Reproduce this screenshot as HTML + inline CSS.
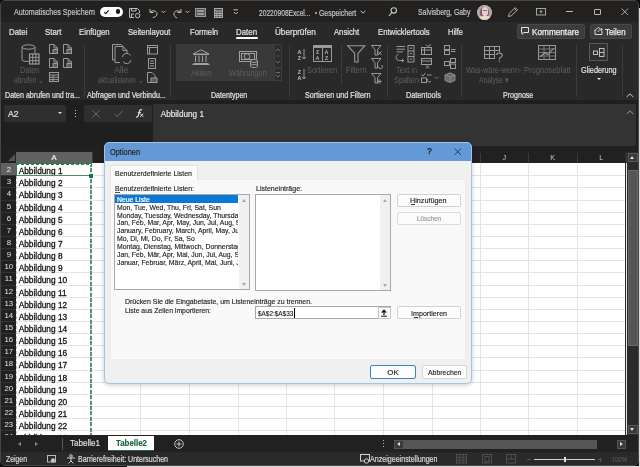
<!DOCTYPE html>
<html><head><meta charset="utf-8">
<style>
*{box-sizing:border-box;margin:0;padding:0}
html,body{width:640px;height:467px;overflow:hidden;background:#0e0e0e}
body{position:relative;font-family:"Liberation Sans",sans-serif}
.a{position:absolute}
.t{position:absolute;white-space:pre;font-family:"Liberation Sans",sans-serif;-webkit-text-stroke:0.2px;filter:grayscale(1)}
svg{position:absolute;overflow:visible}
</style></head><body>
<div class="a" style="left:639px;top:8px;width:1px;height:459px;background:#dcdcdc"></div>
<div class="a" style="left:127px;top:466px;width:513px;height:1px;background:#dcdcdc"></div>
<div class="a" style="left:0;top:0;width:639px;height:466px;border:1px solid #474747;border-radius:5px;background:#292929;overflow:hidden"></div>
<div class="a" style="left:1px;top:1px;width:637px;height:21px;background:#232120;border-radius:4px 4px 0 0"></div>
<div class="a" style="left:1px;top:22px;width:637px;height:78px;background:#292929;"></div>
<div class="a" style="left:1px;top:100px;width:637px;height:52px;background:#1f1f1f;"></div>
<div class="a" style="left:4px;top:105px;width:62px;height:17px;background:#2f2f2f;border-radius:2px"></div>
<div class="a" style="left:84px;top:105px;width:68px;height:17px;background:#2f2f2f;border-radius:2px"></div>
<div class="a" style="left:153px;top:104px;width:483px;height:42px;background:#333333;border-radius:2px"></div>
<div class="a" style="left:1px;top:146px;width:637px;height:17px;background:#212121;"></div>
<div class="a" style="left:16px;top:163px;width:609px;height:273px;background:#ffffff;"></div>
<div class="a" style="left:1px;top:163px;width:15px;height:273px;background:#212121;"></div>
<div class="a" style="left:625px;top:152px;width:13px;height:284px;background:#2b2b2b;"></div>
<div class="a" style="left:140px;top:163px;width:1px;height:273px;background:#e5e5e5;"></div>
<div class="a" style="left:189px;top:163px;width:1px;height:273px;background:#e5e5e5;"></div>
<div class="a" style="left:238px;top:163px;width:1px;height:273px;background:#e5e5e5;"></div>
<div class="a" style="left:286px;top:163px;width:1px;height:273px;background:#e5e5e5;"></div>
<div class="a" style="left:334px;top:163px;width:1px;height:273px;background:#e5e5e5;"></div>
<div class="a" style="left:383px;top:163px;width:1px;height:273px;background:#e5e5e5;"></div>
<div class="a" style="left:432px;top:163px;width:1px;height:273px;background:#e5e5e5;"></div>
<div class="a" style="left:480px;top:163px;width:1px;height:273px;background:#e5e5e5;"></div>
<div class="a" style="left:528px;top:163px;width:1px;height:273px;background:#e5e5e5;"></div>
<div class="a" style="left:577px;top:163px;width:1px;height:273px;background:#e5e5e5;"></div>
<div class="a" style="left:626px;top:163px;width:1px;height:273px;background:#e5e5e5;"></div>
<div class="a" style="left:16px;top:175px;width:609px;height:1px;background:#e5e5e5;"></div>
<div class="a" style="left:1px;top:175px;width:15px;height:1px;background:#333333;"></div>
<div class="a" style="left:16px;top:187px;width:609px;height:1px;background:#e5e5e5;"></div>
<div class="a" style="left:1px;top:187px;width:15px;height:1px;background:#333333;"></div>
<div class="a" style="left:16px;top:200px;width:609px;height:1px;background:#e5e5e5;"></div>
<div class="a" style="left:1px;top:200px;width:15px;height:1px;background:#333333;"></div>
<div class="a" style="left:16px;top:212px;width:609px;height:1px;background:#e5e5e5;"></div>
<div class="a" style="left:1px;top:212px;width:15px;height:1px;background:#333333;"></div>
<div class="a" style="left:16px;top:224px;width:609px;height:1px;background:#e5e5e5;"></div>
<div class="a" style="left:1px;top:224px;width:15px;height:1px;background:#333333;"></div>
<div class="a" style="left:16px;top:236px;width:609px;height:1px;background:#e5e5e5;"></div>
<div class="a" style="left:1px;top:236px;width:15px;height:1px;background:#333333;"></div>
<div class="a" style="left:16px;top:248px;width:609px;height:1px;background:#e5e5e5;"></div>
<div class="a" style="left:1px;top:248px;width:15px;height:1px;background:#333333;"></div>
<div class="a" style="left:16px;top:260px;width:609px;height:1px;background:#e5e5e5;"></div>
<div class="a" style="left:1px;top:260px;width:15px;height:1px;background:#333333;"></div>
<div class="a" style="left:16px;top:272px;width:609px;height:1px;background:#e5e5e5;"></div>
<div class="a" style="left:1px;top:272px;width:15px;height:1px;background:#333333;"></div>
<div class="a" style="left:16px;top:285px;width:609px;height:1px;background:#e5e5e5;"></div>
<div class="a" style="left:1px;top:285px;width:15px;height:1px;background:#333333;"></div>
<div class="a" style="left:16px;top:297px;width:609px;height:1px;background:#e5e5e5;"></div>
<div class="a" style="left:1px;top:297px;width:15px;height:1px;background:#333333;"></div>
<div class="a" style="left:16px;top:309px;width:609px;height:1px;background:#e5e5e5;"></div>
<div class="a" style="left:1px;top:309px;width:15px;height:1px;background:#333333;"></div>
<div class="a" style="left:16px;top:321px;width:609px;height:1px;background:#e5e5e5;"></div>
<div class="a" style="left:1px;top:321px;width:15px;height:1px;background:#333333;"></div>
<div class="a" style="left:16px;top:333px;width:609px;height:1px;background:#e5e5e5;"></div>
<div class="a" style="left:1px;top:333px;width:15px;height:1px;background:#333333;"></div>
<div class="a" style="left:16px;top:345px;width:609px;height:1px;background:#e5e5e5;"></div>
<div class="a" style="left:1px;top:345px;width:15px;height:1px;background:#333333;"></div>
<div class="a" style="left:16px;top:357px;width:609px;height:1px;background:#e5e5e5;"></div>
<div class="a" style="left:1px;top:357px;width:15px;height:1px;background:#333333;"></div>
<div class="a" style="left:16px;top:370px;width:609px;height:1px;background:#e5e5e5;"></div>
<div class="a" style="left:1px;top:370px;width:15px;height:1px;background:#333333;"></div>
<div class="a" style="left:16px;top:382px;width:609px;height:1px;background:#e5e5e5;"></div>
<div class="a" style="left:1px;top:382px;width:15px;height:1px;background:#333333;"></div>
<div class="a" style="left:16px;top:394px;width:609px;height:1px;background:#e5e5e5;"></div>
<div class="a" style="left:1px;top:394px;width:15px;height:1px;background:#333333;"></div>
<div class="a" style="left:16px;top:406px;width:609px;height:1px;background:#e5e5e5;"></div>
<div class="a" style="left:1px;top:406px;width:15px;height:1px;background:#333333;"></div>
<div class="a" style="left:16px;top:418px;width:609px;height:1px;background:#e5e5e5;"></div>
<div class="a" style="left:1px;top:418px;width:15px;height:1px;background:#333333;"></div>
<div class="a" style="left:16px;top:430px;width:609px;height:1px;background:#e5e5e5;"></div>
<div class="a" style="left:1px;top:430px;width:15px;height:1px;background:#333333;"></div>
<div class="a" style="left:16px;top:442px;width:609px;height:1px;background:#e5e5e5;"></div>
<div class="a" style="left:1px;top:442px;width:15px;height:1px;background:#333333;"></div>
<div class="a" style="left:16px;top:455px;width:609px;height:1px;background:#e5e5e5;"></div>
<div class="a" style="left:1px;top:455px;width:15px;height:1px;background:#333333;"></div>
<div class="a" style="left:16px;top:152px;width:76px;height:11px;background:#616161;"></div>
<div class="a" style="left:8px;top:154px;width:7px;height:7px;background:#555;clip-path:polygon(100% 0,100% 100%,0 100%)"></div>
<div class="t" style="left:51.46px;top:152.00px;line-height:11px;font-size:7.6px;color:#f2f2f2;font-weight:400;">A</div>
<div class="a" style="left:92px;top:153px;width:1px;height:10px;background:#3a3a3a;"></div>
<div class="a" style="left:140px;top:153px;width:1px;height:10px;background:#3a3a3a;"></div>
<div class="a" style="left:189px;top:153px;width:1px;height:10px;background:#3a3a3a;"></div>
<div class="a" style="left:238px;top:153px;width:1px;height:10px;background:#3a3a3a;"></div>
<div class="a" style="left:286px;top:153px;width:1px;height:10px;background:#3a3a3a;"></div>
<div class="a" style="left:334px;top:153px;width:1px;height:10px;background:#3a3a3a;"></div>
<div class="a" style="left:383px;top:153px;width:1px;height:10px;background:#3a3a3a;"></div>
<div class="a" style="left:432px;top:153px;width:1px;height:10px;background:#3a3a3a;"></div>
<div class="a" style="left:480px;top:153px;width:1px;height:10px;background:#3a3a3a;"></div>
<div class="a" style="left:528px;top:153px;width:1px;height:10px;background:#3a3a3a;"></div>
<div class="a" style="left:577px;top:153px;width:1px;height:10px;background:#3a3a3a;"></div>
<div class="a" style="left:626px;top:153px;width:1px;height:10px;background:#3a3a3a;"></div>
<div class="t" style="left:502.45px;top:152.30px;line-height:11px;font-size:7.2px;color:#c8c8c8;font-weight:400;-webkit-text-stroke:0">J</div>
<div class="t" style="left:550.35px;top:152.30px;line-height:11px;font-size:7.2px;color:#c8c8c8;font-weight:400;-webkit-text-stroke:0">K</div>
<div class="t" style="left:599.25px;top:152.30px;line-height:11px;font-size:7.2px;color:#c8c8c8;font-weight:400;-webkit-text-stroke:0">L</div>
<div class="a" style="left:1px;top:163px;width:15px;height:12px;background:#616161;"></div>
<div class="t" style="left:6.63px;top:163.70px;line-height:12px;font-size:7.8px;color:#f2f2f2;font-weight:400;-webkit-text-stroke:0">2</div>
<div class="t" style="left:18.70px;top:164.90px;line-height:12px;font-size:8.3px;color:#151515;font-weight:400;-webkit-text-stroke:0.15px;-webkit-text-stroke:0.3px #151515">Abbildung 1</div>
<div class="t" style="left:6.63px;top:175.70px;line-height:12px;font-size:7.8px;color:#e2e2e2;font-weight:400;-webkit-text-stroke:0">3</div>
<div class="t" style="left:18.70px;top:176.90px;line-height:12px;font-size:8.3px;color:#151515;font-weight:400;-webkit-text-stroke:0.15px;-webkit-text-stroke:0.3px #151515">Abbildung 2</div>
<div class="t" style="left:6.63px;top:187.70px;line-height:12px;font-size:7.8px;color:#e2e2e2;font-weight:400;-webkit-text-stroke:0">4</div>
<div class="t" style="left:18.70px;top:188.90px;line-height:12px;font-size:8.3px;color:#151515;font-weight:400;-webkit-text-stroke:0.15px;-webkit-text-stroke:0.3px #151515">Abbildung 3</div>
<div class="t" style="left:6.63px;top:200.70px;line-height:12px;font-size:7.8px;color:#e2e2e2;font-weight:400;-webkit-text-stroke:0">5</div>
<div class="t" style="left:18.70px;top:201.90px;line-height:12px;font-size:8.3px;color:#151515;font-weight:400;-webkit-text-stroke:0.15px;-webkit-text-stroke:0.3px #151515">Abbildung 4</div>
<div class="t" style="left:6.63px;top:212.70px;line-height:12px;font-size:7.8px;color:#e2e2e2;font-weight:400;-webkit-text-stroke:0">6</div>
<div class="t" style="left:18.70px;top:213.90px;line-height:12px;font-size:8.3px;color:#151515;font-weight:400;-webkit-text-stroke:0.15px;-webkit-text-stroke:0.3px #151515">Abbildung 5</div>
<div class="t" style="left:6.63px;top:224.70px;line-height:12px;font-size:7.8px;color:#e2e2e2;font-weight:400;-webkit-text-stroke:0">7</div>
<div class="t" style="left:18.70px;top:225.90px;line-height:12px;font-size:8.3px;color:#151515;font-weight:400;-webkit-text-stroke:0.15px;-webkit-text-stroke:0.3px #151515">Abbildung 6</div>
<div class="t" style="left:6.63px;top:236.70px;line-height:12px;font-size:7.8px;color:#e2e2e2;font-weight:400;-webkit-text-stroke:0">8</div>
<div class="t" style="left:18.70px;top:237.90px;line-height:12px;font-size:8.3px;color:#151515;font-weight:400;-webkit-text-stroke:0.15px;-webkit-text-stroke:0.3px #151515">Abbildung 7</div>
<div class="t" style="left:6.63px;top:248.70px;line-height:12px;font-size:7.8px;color:#e2e2e2;font-weight:400;-webkit-text-stroke:0">9</div>
<div class="t" style="left:18.70px;top:249.90px;line-height:12px;font-size:8.3px;color:#151515;font-weight:400;-webkit-text-stroke:0.15px;-webkit-text-stroke:0.3px #151515">Abbildung 8</div>
<div class="t" style="left:4.46px;top:260.70px;line-height:12px;font-size:7.8px;color:#e2e2e2;font-weight:400;-webkit-text-stroke:0">10</div>
<div class="t" style="left:18.70px;top:261.90px;line-height:12px;font-size:8.3px;color:#151515;font-weight:400;-webkit-text-stroke:0.15px;-webkit-text-stroke:0.3px #151515">Abbildung 9</div>
<div class="t" style="left:4.75px;top:272.70px;line-height:12px;font-size:7.8px;color:#e2e2e2;font-weight:400;-webkit-text-stroke:0">11</div>
<div class="t" style="left:18.70px;top:273.90px;line-height:12px;font-size:8.3px;color:#151515;font-weight:400;-webkit-text-stroke:0.15px;-webkit-text-stroke:0.3px #151515">Abbildung 10</div>
<div class="t" style="left:4.46px;top:285.70px;line-height:12px;font-size:7.8px;color:#e2e2e2;font-weight:400;-webkit-text-stroke:0">12</div>
<div class="t" style="left:18.70px;top:286.90px;line-height:12px;font-size:8.3px;color:#151515;font-weight:400;-webkit-text-stroke:0.15px;-webkit-text-stroke:0.3px #151515">Abbildung 11</div>
<div class="t" style="left:4.46px;top:297.70px;line-height:12px;font-size:7.8px;color:#e2e2e2;font-weight:400;-webkit-text-stroke:0">13</div>
<div class="t" style="left:18.70px;top:298.90px;line-height:12px;font-size:8.3px;color:#151515;font-weight:400;-webkit-text-stroke:0.15px;-webkit-text-stroke:0.3px #151515">Abbildung 12</div>
<div class="t" style="left:4.46px;top:309.70px;line-height:12px;font-size:7.8px;color:#e2e2e2;font-weight:400;-webkit-text-stroke:0">14</div>
<div class="t" style="left:18.70px;top:310.90px;line-height:12px;font-size:8.3px;color:#151515;font-weight:400;-webkit-text-stroke:0.15px;-webkit-text-stroke:0.3px #151515">Abbildung 13</div>
<div class="t" style="left:4.46px;top:321.70px;line-height:12px;font-size:7.8px;color:#e2e2e2;font-weight:400;-webkit-text-stroke:0">15</div>
<div class="t" style="left:18.70px;top:322.90px;line-height:12px;font-size:8.3px;color:#151515;font-weight:400;-webkit-text-stroke:0.15px;-webkit-text-stroke:0.3px #151515">Abbildung 14</div>
<div class="t" style="left:4.46px;top:333.70px;line-height:12px;font-size:7.8px;color:#e2e2e2;font-weight:400;-webkit-text-stroke:0">16</div>
<div class="t" style="left:18.70px;top:334.90px;line-height:12px;font-size:8.3px;color:#151515;font-weight:400;-webkit-text-stroke:0.15px;-webkit-text-stroke:0.3px #151515">Abbildung 15</div>
<div class="t" style="left:4.46px;top:345.70px;line-height:12px;font-size:7.8px;color:#e2e2e2;font-weight:400;-webkit-text-stroke:0">17</div>
<div class="t" style="left:18.70px;top:346.90px;line-height:12px;font-size:8.3px;color:#151515;font-weight:400;-webkit-text-stroke:0.15px;-webkit-text-stroke:0.3px #151515">Abbildung 16</div>
<div class="t" style="left:4.46px;top:357.70px;line-height:12px;font-size:7.8px;color:#e2e2e2;font-weight:400;-webkit-text-stroke:0">18</div>
<div class="t" style="left:18.70px;top:358.90px;line-height:12px;font-size:8.3px;color:#151515;font-weight:400;-webkit-text-stroke:0.15px;-webkit-text-stroke:0.3px #151515">Abbildung 17</div>
<div class="t" style="left:4.46px;top:370.70px;line-height:12px;font-size:7.8px;color:#e2e2e2;font-weight:400;-webkit-text-stroke:0">19</div>
<div class="t" style="left:18.70px;top:371.90px;line-height:12px;font-size:8.3px;color:#151515;font-weight:400;-webkit-text-stroke:0.15px;-webkit-text-stroke:0.3px #151515">Abbildung 18</div>
<div class="t" style="left:4.46px;top:382.70px;line-height:12px;font-size:7.8px;color:#e2e2e2;font-weight:400;-webkit-text-stroke:0">20</div>
<div class="t" style="left:18.70px;top:383.90px;line-height:12px;font-size:8.3px;color:#151515;font-weight:400;-webkit-text-stroke:0.15px;-webkit-text-stroke:0.3px #151515">Abbildung 19</div>
<div class="t" style="left:4.46px;top:394.70px;line-height:12px;font-size:7.8px;color:#e2e2e2;font-weight:400;-webkit-text-stroke:0">21</div>
<div class="t" style="left:18.70px;top:395.90px;line-height:12px;font-size:8.3px;color:#151515;font-weight:400;-webkit-text-stroke:0.15px;-webkit-text-stroke:0.3px #151515">Abbildung 20</div>
<div class="t" style="left:4.46px;top:406.70px;line-height:12px;font-size:7.8px;color:#e2e2e2;font-weight:400;-webkit-text-stroke:0">22</div>
<div class="t" style="left:18.70px;top:407.90px;line-height:12px;font-size:8.3px;color:#151515;font-weight:400;-webkit-text-stroke:0.15px;-webkit-text-stroke:0.3px #151515">Abbildung 21</div>
<div class="t" style="left:4.46px;top:418.70px;line-height:12px;font-size:7.8px;color:#e2e2e2;font-weight:400;-webkit-text-stroke:0">23</div>
<div class="t" style="left:18.70px;top:419.90px;line-height:12px;font-size:8.3px;color:#151515;font-weight:400;-webkit-text-stroke:0.15px;-webkit-text-stroke:0.3px #151515">Abbildung 22</div>
<div class="t" style="left:4.46px;top:430.70px;line-height:12px;font-size:7.8px;color:#e2e2e2;font-weight:400;-webkit-text-stroke:0">24</div>
<div class="t" style="left:18.70px;top:431.90px;line-height:12px;font-size:8.3px;color:#151515;font-weight:400;-webkit-text-stroke:0.15px;-webkit-text-stroke:0.3px #151515">Abbildung 23</div>
<div class="a" style="left:90px;top:163px;width:2px;height:273px;background:repeating-linear-gradient(180deg,#5a8f77 0 4px,#dcebe4 4px 5.4px)"></div>
<div class="a" style="left:16px;top:176px;width:1px;height:260px;background:repeating-linear-gradient(180deg,#b5cbbd 0 3.4px,#ffffff 3.4px 5px)"></div>
<div class="a" style="left:16px;top:163px;width:76px;height:2px;background:#2d7a52;"></div>
<div class="a" style="left:16px;top:164px;width:76px;height:1px;background:repeating-linear-gradient(90deg,#2d7a52 0 3.4px,#ffffff 3.4px 5px)"></div>
<div class="a" style="left:16px;top:163px;width:1px;height:13px;background:#2d7a52;"></div>
<div class="a" style="left:17px;top:175px;width:74px;height:1px;background:#4c8c68;"></div>
<div class="a" style="left:89px;top:174px;width:4px;height:4px;background:#1e7145;"></div>
<div class="a" style="left:628px;top:153px;width:10px;height:9px;background:#3a3a3a;border:1px solid #5a5a5a"></div>
<div class="a" style="left:630px;top:156px;width:0;height:0;border-left:2.5px solid transparent;border-right:2.5px solid transparent;border-bottom:3px solid #e0e0e0"></div>
<div class="a" style="left:628px;top:170px;width:10px;height:176px;background:#555555;border:1px solid #6a6a6a"></div>
<div class="a" style="left:628px;top:425px;width:10px;height:9px;background:#3a3a3a;border:1px solid #5a5a5a"></div>
<div class="a" style="left:630px;top:428px;width:0;height:0;border-left:2.5px solid transparent;border-right:2.5px solid transparent;border-top:3px solid #e0e0e0"></div>
<div class="t" style="left:14.00px;top:4.80px;line-height:14px;font-size:9.2px;color:#c4c4c4;font-weight:400;transform:scaleX(0.7774);transform-origin:0 0;">Automatisches Speichern</div>
<div class="a" style="left:100px;top:7px;width:23px;height:9.5px;background:#ffffff;border-radius:5px"></div>
<svg style="left:103px;top:9px;" width="7" height="6" viewBox="0 0 7 6" fill="none" stroke="#111" stroke-width="1.1"><path d="M1.3 3.2 L2.8 4.6 L5.6 1.4"/></svg>
<div class="a" style="left:115.6px;top:9.4px;width:4.6px;height:4.6px;border-radius:50%;background:#111"></div>
<svg style="left:129px;top:8px;" width="12" height="10" viewBox="0 0 12 10" fill="none" stroke="#bdbdbd" stroke-width="1"><path d="M0.5 0.5 H8.5 L10.5 2.5 V5 M0.5 0.5 V9.5 H5"/><path d="M2.5 0.5 V3 H7 V0.5"/><path d="M2.5 9.5 V6 H5"/><circle cx="8.6" cy="7.6" r="2.2"/></svg>
<svg style="left:148px;top:8px;" width="11" height="10" viewBox="0 0 11 10" fill="none" stroke="#bdbdbd" stroke-width="1"><path d="M2 1 V4.5 H5.5"/><path d="M2.3 4.3 C4 2.2 8.5 2.2 9 5.5 C9.4 8 7 9.3 4.8 9.6"/></svg>
<svg style="left:161px;top:10px;" width="5" height="4" viewBox="0 0 5 4" fill="none" stroke="#bdbdbd" stroke-width="1"><path d="M0.5 0.8 L2.5 2.8 L4.5 0.8"/></svg>
<svg style="left:172px;top:8px;" width="11" height="11" viewBox="0 0 11 11" fill="none" stroke="#bdbdbd" stroke-width="1"><path d="M9 1 V4.5 H5.5"/><path d="M8.7 4.3 C7 2.2 2.5 2.2 2 5.5 C1.6 8 3.5 9.5 5.2 10"/></svg>
<svg style="left:185px;top:10px;" width="5" height="4" viewBox="0 0 5 4" fill="none" stroke="#bdbdbd" stroke-width="1"><path d="M0.5 0.8 L2.5 2.8 L4.5 0.8"/></svg>
<svg style="left:195px;top:8px;" width="11" height="9" viewBox="0 0 11 9" fill="none" stroke="#9a9a9a" stroke-width="1"><rect x="0.5" y="0.5" width="10" height="8" fill="#555"/><path d="M2 3 H9 M2 6 H9" stroke="#ddd"/></svg>
<svg style="left:214px;top:8px;" width="9" height="10" viewBox="0 0 9 10" fill="none" stroke="#a8a8a8" stroke-width="1"><rect x="0.5" y="0.5" width="8" height="9" fill="#4a4a4a"/><path d="M0.5 3 H8.5 M0.5 5.5 H8.5 M0.5 7.5 H8.5 M3 3 V9.5 M6 3 V9.5"/></svg>
<svg style="left:233px;top:9px;" width="6" height="6" viewBox="0 0 6 6" fill="none" stroke="#bdbdbd" stroke-width="1"><path d="M0.5 0.8 H5"/><path d="M0.8 3 L2.8 5 L4.8 3"/></svg>
<div class="t" style="left:259.00px;top:5.60px;line-height:14px;font-size:9.0px;color:#c4c4c4;font-weight:400;transform:scaleX(0.7389);transform-origin:0 0;">20220908Excel...</div>
<div class="a" style="left:314.7px;top:11.6px;width:2px;height:2px;border-radius:50%;background:#c4c4c4"></div>
<div class="t" style="left:319.40px;top:5.60px;line-height:14px;font-size:9.0px;color:#c4c4c4;font-weight:400;transform:scaleX(0.7665);transform-origin:0 0;">Gespeichert</div>
<svg style="left:360px;top:10px;" width="6" height="4" viewBox="0 0 6 4" fill="none" stroke="#c4c4c4" stroke-width="1"><path d="M0.5 0.8 L3 3.2 L5.5 0.8"/></svg>
<svg style="left:388px;top:7px;" width="9" height="10" viewBox="0 0 9 10" fill="none" stroke="#c4c4c4" stroke-width="1.1"><circle cx="5.8" cy="3.4" r="2.7"/><path d="M4 5.3 L1 8.8"/></svg>
<div class="t" style="left:418.00px;top:5.40px;line-height:14px;font-size:9.0px;color:#c4c4c4;font-weight:400;transform:scaleX(0.7644);transform-origin:0 0;">Salvisberg, Gaby</div>
<div class="a" style="left:476.7px;top:4.6px;width:15px;height:15px;border-radius:50%;overflow:hidden;background:#aaa3a8"><div class="a" style="left:3px;top:2px;width:9.5px;height:11px;border-radius:45%;background:#8a5564"></div><div class="a" style="left:5px;top:2.5px;width:6px;height:8.5px;border-radius:40%;background:#e9cccb"></div><div class="a" style="left:6px;top:5.5px;width:4.5px;height:1.2px;background:#8a7070"></div><div class="a" style="left:2px;top:11.5px;width:12px;height:6px;border-radius:40%;background:#eedcc8"></div><div class="a" style="left:0;top:0;width:15px;height:15px;border-radius:50%;border:1px solid rgba(200,200,200,0.6)"></div></div>
<svg style="left:507px;top:6px;" width="12" height="12" viewBox="0 0 12 12" fill="none" stroke="#bdbdbd" stroke-width="0.9"><path d="M1.5 10.5 L2.2 7.6 L8.2 1.6 L10.4 3.8 L4.4 9.8 Z"/><path d="M7.4 2.4 L9.6 4.6"/></svg>
<svg style="left:536px;top:8px;" width="10" height="8" viewBox="0 0 10 8" fill="none" stroke="#b4b4b4" stroke-width="0.9"><rect x="0.5" y="0.5" width="9" height="6.5"/><path d="M5 5.5 V2.5 M3.5 4 L5 2.5 L6.5 4"/></svg>
<div class="a" style="left:566px;top:11.2px;width:6.5px;height:0.9px;background:#b8b8b8;"></div>
<div class="a" style="left:594px;top:8.5px;width:6.5px;height:6.5px;background:transparent;border:0.9px solid #b8b8b8;border-radius:1px"></div>
<svg style="left:621.3px;top:8.4px;" width="8" height="8" viewBox="0 0 8 8" fill="none" stroke="#b8b8b8" stroke-width="0.9"><path d="M0.5 0.5 L7 7 M7 0.5 L0.5 7"/></svg>
<div class="t" style="left:9.40px;top:25.80px;line-height:13px;font-size:8.6px;color:#e2e2e2;font-weight:400;transform:scaleX(0.9171);transform-origin:0 0;">Datei</div>
<div class="t" style="left:45.00px;top:25.80px;line-height:13px;font-size:8.6px;color:#e2e2e2;font-weight:400;transform:scaleX(0.9088);transform-origin:0 0;">Start</div>
<div class="t" style="left:78.80px;top:25.80px;line-height:13px;font-size:8.6px;color:#e2e2e2;font-weight:400;transform:scaleX(0.9017);transform-origin:0 0;">Einfügen</div>
<div class="t" style="left:128.40px;top:25.80px;line-height:13px;font-size:8.6px;color:#e2e2e2;font-weight:400;transform:scaleX(0.8941);transform-origin:0 0;">Seitenlayout</div>
<div class="t" style="left:189.80px;top:25.80px;line-height:13px;font-size:8.6px;color:#e2e2e2;font-weight:400;transform:scaleX(0.8912);transform-origin:0 0;">Formeln</div>
<div class="t" style="left:236.20px;top:25.80px;line-height:13px;font-size:8.6px;color:#e2e2e2;font-weight:400;transform:scaleX(0.9199);transform-origin:0 0;">Daten</div>
<div class="t" style="left:274.70px;top:25.80px;line-height:13px;font-size:8.6px;color:#e2e2e2;font-weight:400;transform:scaleX(0.9465);transform-origin:0 0;">Überprüfen</div>
<div class="t" style="left:333.80px;top:25.80px;line-height:13px;font-size:8.6px;color:#e2e2e2;font-weight:400;transform:scaleX(0.8940);transform-origin:0 0;">Ansicht</div>
<div class="t" style="left:377.80px;top:25.80px;line-height:13px;font-size:8.6px;color:#e2e2e2;font-weight:400;transform:scaleX(0.9003);transform-origin:0 0;">Entwicklertools</div>
<div class="t" style="left:448.20px;top:25.80px;line-height:13px;font-size:8.6px;color:#e2e2e2;font-weight:400;transform:scaleX(0.8719);transform-origin:0 0;">Hilfe</div>
<div class="a" style="left:236px;top:37px;width:22px;height:2px;background:#ffffff;border-radius:1px"></div>
<div class="a" style="left:517px;top:24px;width:68px;height:15px;background:#3c3c3c;border:1px solid #484848;border-radius:2px"></div>
<div class="a" style="left:590px;top:24px;width:42px;height:15px;background:#3c3c3c;border:1px solid #484848;border-radius:2px"></div>
<svg style="left:521px;top:27px;" width="8" height="8" viewBox="0 0 8 8" fill="none" stroke="#e6e6e6" stroke-width="1"><path d="M0.5 0.5 H7.5 V5.5 H3 L1.2 7.3 V5.5 H0.5 Z"/></svg>
<div class="t" style="left:531.70px;top:25.00px;line-height:14px;font-size:9.0px;color:#f0f0f0;font-weight:400;transform:scaleX(0.9121);transform-origin:0 0;-webkit-text-stroke:0.25px">Kommentare</div>
<svg style="left:594px;top:26px;" width="9" height="9" viewBox="0 0 9 9" fill="none" stroke="#e6e6e6" stroke-width="0.9"><path d="M1 4 V8.5 H8 V5"/><path d="M0.5 4.5 L4.5 1.5 L6 2.6"/><path d="M4 6 C4.5 4 6 3.5 8 3.5 M6.8 2 L8.3 3.5 L6.8 5"/></svg>
<div class="t" style="left:605.00px;top:25.00px;line-height:14px;font-size:9.0px;color:#f0f0f0;font-weight:400;transform:scaleX(0.8718);transform-origin:0 0;-webkit-text-stroke:0.25px">Teilen</div>
<div class="a" style="left:84px;top:45px;width:1px;height:52px;background:#3c3c3c;"></div>
<div class="a" style="left:170px;top:45px;width:1px;height:52px;background:#3c3c3c;"></div>
<div class="a" style="left:289px;top:45px;width:1px;height:52px;background:#3c3c3c;"></div>
<div class="a" style="left:387px;top:45px;width:1px;height:52px;background:#3c3c3c;"></div>
<div class="a" style="left:461px;top:45px;width:1px;height:52px;background:#3c3c3c;"></div>
<div class="a" style="left:576px;top:45px;width:1px;height:52px;background:#3c3c3c;"></div>
<div class="a" style="left:622px;top:45px;width:1px;height:52px;background:#3c3c3c;"></div>
<div class="a" style="left:341px;top:45px;width:1px;height:40px;background:#3c3c3c;"></div>
<div class="t" style="left:4.70px;top:88.70px;line-height:13px;font-size:8.8px;color:#e2e2e2;font-weight:400;transform:scaleX(0.8071);transform-origin:0 0;">Daten abrufen und tra...</div>
<div class="t" style="left:87.20px;top:88.70px;line-height:13px;font-size:8.8px;color:#e2e2e2;font-weight:400;transform:scaleX(0.8095);transform-origin:0 0;">Abfragen und Verbindu...</div>
<div class="t" style="left:211.00px;top:88.70px;line-height:13px;font-size:8.8px;color:#e2e2e2;font-weight:400;transform:scaleX(0.8067);transform-origin:0 0;">Datentypen</div>
<div class="t" style="left:305.00px;top:88.70px;line-height:13px;font-size:8.8px;color:#e2e2e2;font-weight:400;transform:scaleX(0.8205);transform-origin:0 0;">Sortieren und Filtern</div>
<div class="t" style="left:406.40px;top:88.70px;line-height:13px;font-size:8.8px;color:#e2e2e2;font-weight:400;transform:scaleX(0.8273);transform-origin:0 0;">Datentools</div>
<div class="t" style="left:502.70px;top:88.70px;line-height:13px;font-size:8.8px;color:#e2e2e2;font-weight:400;transform:scaleX(0.8043);transform-origin:0 0;">Prognose</div>
<svg style="left:21px;top:44px;" width="20" height="21" viewBox="0 0 20 21" fill="none" stroke="#9a9a9a" stroke-width="1"><path d="M1 3 V16 C1 18 14 18 14 16 V3"/><ellipse cx="7.5" cy="3" rx="6.5" ry="2.2"/><rect x="8.5" y="10" width="9.5" height="10" fill="#292929" stroke-width="1.2"/><path d="M8.5 13.3 H18 M8.5 16.6 H18 M11.7 10 V20 M14.9 10 V20"/></svg>
<div class="t" style="left:20.20px;top:64.40px;line-height:13px;font-size:8.6px;color:#5f5f5f;font-weight:400;-webkit-text-stroke:0.15px;transform:scaleX(0.8371);transform-origin:0 0;-webkit-text-stroke:0">Daten</div>
<div class="t" style="left:13.60px;top:74.20px;line-height:13px;font-size:8.6px;color:#5f5f5f;font-weight:400;-webkit-text-stroke:0.15px;transform:scaleX(0.7687);transform-origin:0 0;-webkit-text-stroke:0">abrufen ⌄</div>
<svg style="left:49px;top:44px;" width="10" height="10" viewBox="0 0 10 10" fill="none" stroke="#9a9a9a" stroke-width="1"><path d="M0.5 0.5 H5 L8.5 4 V9.5 H0.5 Z"/><path d="M5 0.5 V4 H8.5"/><rect x="4" y="5.5" width="4.5" height="4" fill="#5a5a5a"/></svg>
<svg style="left:63px;top:44px;" width="10" height="10" viewBox="0 0 10 10" fill="none" stroke="#9a9a9a" stroke-width="1"><path d="M0.5 0.5 H5 L8.5 4 V9.5 H0.5 Z"/><path d="M5 0.5 V4 H8.5"/><rect x="4" y="5.5" width="4.5" height="4" fill="#5a5a5a"/></svg>
<svg style="left:49px;top:58px;" width="10" height="10" viewBox="0 0 10 10" fill="none" stroke="#9a9a9a" stroke-width="1"><path d="M0.5 0.5 H5 L8.5 4 V9.5 H0.5 Z"/><path d="M5 0.5 V4 H8.5"/><rect x="4" y="5.5" width="4.5" height="4" fill="#5a5a5a"/></svg>
<svg style="left:63px;top:58px;" width="10" height="10" viewBox="0 0 10 10" fill="none" stroke="#9a9a9a" stroke-width="1"><path d="M0.5 0.5 H5 L8.5 4 V9.5 H0.5 Z"/><path d="M5 0.5 V4 H8.5"/><rect x="4" y="5.5" width="4.5" height="4" fill="#5a5a5a"/></svg>
<svg style="left:49px;top:72px;" width="10" height="10" viewBox="0 0 10 10" fill="none" stroke="#9a9a9a" stroke-width="1"><rect x="0.5" y="0.5" width="9" height="9"/><path d="M0.5 3 H9.5 M0.5 5.3 H9.5 M0.5 7.6 H9.5 M4 3 V9.5"/></svg>
<svg style="left:112px;top:44px;" width="21" height="20" viewBox="0 0 21 20" fill="none" stroke="#9a9a9a" stroke-width="1"><path d="M3 16 H0.5 V0.5 H9 L11 2.5"/><path d="M3 2.5 H11 L15 6.5 V9"/><path d="M3 2.5 V18.5 H8"/><path d="M11 2.5 V6.5 H15"/><path d="M10.5 13 A4.3 4.3 0 0 1 18.5 11.5 M19 16 A4.3 4.3 0 0 1 11 17.5"/></svg>
<div class="t" style="left:114.23px;top:64.30px;line-height:13px;font-size:8.6px;color:#5f5f5f;font-weight:400;-webkit-text-stroke:0.15px;-webkit-text-stroke:0">Alle</div>
<div class="t" style="left:98.00px;top:73.80px;line-height:13px;font-size:8.6px;color:#5f5f5f;font-weight:400;-webkit-text-stroke:0.15px;transform:scaleX(0.7844);transform-origin:0 0;-webkit-text-stroke:0">aktualisieren ⌄</div>
<svg style="left:147px;top:45px;" width="11" height="10" viewBox="0 0 11 10" fill="none" stroke="#9a9a9a" stroke-width="1"><rect x="0.5" y="0.5" width="10" height="8.5"/><path d="M0.5 2.5 H10.5 M2.5 2.5 V9"/></svg>
<svg style="left:148px;top:58px;" width="8" height="11" viewBox="0 0 8 11" fill="none" stroke="#9a9a9a" stroke-width="1"><rect x="0.5" y="0.5" width="7" height="10"/><path d="M2 3 H6 M2 5.5 H6 M2 8 H6"/></svg>
<svg style="left:147px;top:72px;" width="11" height="11" viewBox="0 0 11 11" fill="none" stroke="#9a9a9a" stroke-width="1"><path d="M0.5 0.5 H5 L8 3.5 V10.5 H0.5 Z"/><rect x="4" y="6" width="6" height="4.5" fill="#5a5a5a"/></svg>
<div class="a" style="left:176px;top:44px;width:98px;height:37px;background:#393939;"></div>
<div class="a" style="left:274px;top:44px;width:8px;height:12px;background:#2c2c2c;border:1px solid #3c3c3c"></div>
<div class="a" style="left:274px;top:56px;width:8px;height:12px;background:#2c2c2c;border:1px solid #3c3c3c"></div>
<div class="a" style="left:274px;top:68px;width:8px;height:13px;background:#2c2c2c;border:1px solid #3c3c3c"></div>
<svg style="left:275px;top:48px;" width="6" height="4" viewBox="0 0 6 4" fill="none" stroke="#777" stroke-width="1"><path d="M0.8 3 L3 1 L5.2 3"/></svg>
<svg style="left:275px;top:60px;" width="6" height="4" viewBox="0 0 6 4" fill="none" stroke="#777" stroke-width="1"><path d="M0.8 1 L3 3 L5.2 1"/></svg>
<svg style="left:275px;top:72px;" width="6" height="6" viewBox="0 0 6 6" fill="none" stroke="#777" stroke-width="1"><path d="M0.8 0.7 H5.2 M0.8 3 L3 5 L5.2 3"/></svg>
<svg style="left:192px;top:49px;" width="18" height="16" viewBox="0 0 18 16" fill="none" stroke="#a0a0a0" stroke-width="1"><path d="M1 5 L9 0.8 L17 5 Z"/><path d="M1 5.5 H17 M1.5 14.5 H16.5 M0.5 15.5 H17.5"/><path d="M3.5 6.5 V13 M7 6.5 V13 M10.5 6.5 V13 M14 6.5 V13"/></svg>
<svg style="left:239px;top:51px;" width="21" height="17" viewBox="0 0 21 17" fill="none" stroke="#a0a0a0" stroke-width="1"><rect x="0.5" y="0.5" width="17" height="10"/><rect x="2.5" y="2.5" width="13" height="6"/><circle cx="8" cy="5.5" r="2.8"/><ellipse cx="15" cy="10" rx="3.5" ry="1.5" fill="#393939"/><path d="M11.5 10 V15 C11.5 17 18.5 17 18.5 15 V10 M11.5 12.5 C11.5 14 18.5 14 18.5 12.5"/></svg>
<div class="t" style="left:191.00px;top:66.60px;line-height:13px;font-size:8.6px;color:#5f5f5f;font-weight:400;-webkit-text-stroke:0.15px;transform:scaleX(0.8539);transform-origin:0 0;-webkit-text-stroke:0">Aktien</div>
<div class="t" style="left:229.30px;top:66.60px;line-height:13px;font-size:8.6px;color:#5f5f5f;font-weight:400;-webkit-text-stroke:0.15px;transform:scaleX(0.8484);transform-origin:0 0;-webkit-text-stroke:0">Währungen</div>
<svg style="left:296px;top:48px;" width="11" height="13" viewBox="0 0 11 13" fill="none" stroke="#9a9a9a" stroke-width="1"><path d="M8 1 V11 M6 9 L8 11 L10 9"/></svg>
<div class="t" style="left:297.55px;top:46.50px;line-height:10px;font-size:5.4px;color:#a8a8a8;font-weight:700;">A</div>
<div class="t" style="left:297.85px;top:52.50px;line-height:10px;font-size:5.4px;color:#a8a8a8;font-weight:700;">Z</div>
<svg style="left:296px;top:68px;" width="11" height="13" viewBox="0 0 11 13" fill="none" stroke="#9a9a9a" stroke-width="1"><path d="M8 1 V11 M6 9 L8 11 L10 9"/></svg>
<div class="t" style="left:297.85px;top:66.50px;line-height:10px;font-size:5.4px;color:#a8a8a8;font-weight:700;">Z</div>
<div class="t" style="left:297.55px;top:72.50px;line-height:10px;font-size:5.4px;color:#a8a8a8;font-weight:700;">A</div>
<svg style="left:313px;top:45px;" width="19" height="17" viewBox="0 0 19 17" fill="none" stroke="#9a9a9a" stroke-width="1"><rect x="0.5" y="0.5" width="18" height="16"/><path d="M0.5 2.5 H18.5 M9.5 2.5 V16.5" /><rect x="0.5" y="0.5" width="18" height="2" fill="#9a9a9a"/></svg>
<div class="t" style="left:315.91px;top:47.40px;line-height:10px;font-size:5.2px;color:#a8a8a8;font-weight:400;">Z</div>
<div class="t" style="left:315.77px;top:53.00px;line-height:10px;font-size:5.2px;color:#a8a8a8;font-weight:400;">A</div>
<div class="t" style="left:324.77px;top:47.40px;line-height:10px;font-size:5.2px;color:#a8a8a8;font-weight:400;">A</div>
<div class="t" style="left:324.91px;top:53.00px;line-height:10px;font-size:5.2px;color:#a8a8a8;font-weight:400;">Z</div>
<div class="t" style="left:307.00px;top:64.00px;line-height:13px;font-size:8.6px;color:#5f5f5f;font-weight:400;-webkit-text-stroke:0.15px;transform:scaleX(0.8602);transform-origin:0 0;-webkit-text-stroke:0">Sortieren</div>
<svg style="left:347px;top:45px;" width="19" height="18" viewBox="0 0 19 18" fill="none" stroke="#9a9a9a" stroke-width="1.1"><path d="M0.7 0.7 H17.8 L11 8.5 V17 H7.7 V8.5 Z"/></svg>
<div class="t" style="left:346.00px;top:64.00px;line-height:13px;font-size:8.6px;color:#5f5f5f;font-weight:400;-webkit-text-stroke:0.15px;transform:scaleX(0.8581);transform-origin:0 0;-webkit-text-stroke:0">Filtern</div>
<svg style="left:371px;top:45px;" width="12" height="11" viewBox="0 0 12 11" fill="none" stroke="#9a9a9a" stroke-width="1"><path d="M0.5 0.5 H10 L6.5 4.8 V10 H4 V4.8 Z"/><path d="M7 6.5 L10.5 10 M10.5 6.5 L7 10"/></svg>
<svg style="left:371px;top:58px;" width="12" height="11" viewBox="0 0 12 11" fill="none" stroke="#9a9a9a" stroke-width="1"><path d="M0.5 0.5 H10 L6.5 4.8 V10 H4 V4.8 Z"/><path d="M7.5 8.5 A2 2 0 1 0 10.5 7"/></svg>
<svg style="left:371px;top:73px;" width="12" height="11" viewBox="0 0 12 11" fill="none" stroke="#9a9a9a" stroke-width="1"><path d="M0.5 0.5 H10 L6.5 4.8 V10 H4 V4.8 Z"/><path d="M7 6.5 V10.5 M9 6.5 V10.5 M6.5 8.5 H10.5"/></svg>
<svg style="left:395px;top:45px;" width="21" height="18" viewBox="0 0 21 18" fill="none" stroke="#9a9a9a" stroke-width="1"><path d="M1.5 1.5 H10 M1.5 4.2 H10 M1.5 6.9 H8"/><path d="M3.5 9.5 C0 10.5 0.2 15.5 4.5 15.5 H8.5 M7 14 L8.7 15.5 L7 17"/><rect x="13" y="0.5" width="6" height="16.5"/><path d="M13 6 H19 M13 11.5 H19 M14.8 3.2 H17.2 M14.8 8.7 H17.2 M14.8 14.2 H17.2"/></svg>
<div class="t" style="left:395.80px;top:64.30px;line-height:13px;font-size:8.6px;color:#5f5f5f;font-weight:400;-webkit-text-stroke:0.15px;transform:scaleX(0.8453);transform-origin:0 0;-webkit-text-stroke:0">Text in</div>
<div class="t" style="left:393.60px;top:74.30px;line-height:13px;font-size:8.6px;color:#5f5f5f;font-weight:400;-webkit-text-stroke:0.15px;transform:scaleX(0.8574);transform-origin:0 0;-webkit-text-stroke:0">Spalten</div>
<svg style="left:421px;top:44px;" width="11" height="11" viewBox="0 0 11 11" fill="none" stroke="#9a9a9a" stroke-width="1"><rect x="0.5" y="3.5" width="10" height="7"/><path d="M0.5 6 H10.5 M3.5 3.5 V10.5"/><path d="M5 0.5 L7 2.5 L10 0.5" /></svg>
<svg style="left:421px;top:58px;" width="11" height="11" viewBox="0 0 11 11" fill="none" stroke="#9a9a9a" stroke-width="1"><rect x="0.5" y="0.5" width="10" height="6"/><path d="M0.5 3 H10.5"/><path d="M5 7.5 L8 10.5 M8 7.5 L5 10.5"/></svg>
<svg style="left:421px;top:72px;" width="11" height="11" viewBox="0 0 11 11" fill="none" stroke="#9a9a9a" stroke-width="1"><path d="M0.5 2.5 L2 4 L4.5 1"/><rect x="0.5" y="6" width="5" height="4.5"/><path d="M6 3 H10.5 M6.5 7 A2 2 0 1 0 10 9"/></svg>
<svg style="left:434px;top:76px;" width="5" height="4" viewBox="0 0 5 4" fill="none" stroke="#777" stroke-width="1"><path d="M0.5 0.8 L2.5 2.8 L4.5 0.8"/></svg>
<svg style="left:444px;top:45px;" width="12" height="10" viewBox="0 0 12 10" fill="none" stroke="#9a9a9a" stroke-width="1"><rect x="0.5" y="0.5" width="5" height="4"/><rect x="0.5" y="5.5" width="5" height="4"/><path d="M7 4.5 H11.5 M7 6.5 H11.5"/></svg>
<svg style="left:444px;top:58px;" width="12" height="11" viewBox="0 0 12 11" fill="none" stroke="#9a9a9a" stroke-width="1"><rect x="0.5" y="3.5" width="5" height="4"/><rect x="6.5" y="0.5" width="5" height="4"/><rect x="6.5" y="6" width="5" height="4.5"/></svg>
<svg style="left:444px;top:72px;" width="12" height="11" viewBox="0 0 12 11" fill="none" stroke="#8a8a8a" stroke-width="1"><path d="M1 3 L6 0.8 L11 3 V8.5 L6 10.5 L1 8.5 Z" fill="#6a6a6a"/><path d="M1 3 L6 5 L11 3 M6 5 V10.5"/></svg>
<svg style="left:484px;top:46px;" width="21" height="17" viewBox="0 0 21 17" fill="none" stroke="#9a9a9a" stroke-width="1"><rect x="0.5" y="0.5" width="15" height="12"/><path d="M0.5 4.5 H15.5 M0.5 8.5 H15.5 M5.5 0.5 V12.5 M10.5 0.5 V12.5"/><path d="M11 6 H19 V17 H11 Z" fill="#292929" stroke="none"/><path d="M12.5 9 C12.5 6.5 18.2 6.5 18.2 9.2 C18.2 11.2 15.3 11.2 15.3 13.4 M15.3 14.8 V16" stroke-width="1.1"/></svg>
<div class="t" style="left:466.00px;top:63.90px;line-height:13px;font-size:8.6px;color:#5f5f5f;font-weight:400;-webkit-text-stroke:0.15px;transform:scaleX(0.8588);transform-origin:0 0;-webkit-text-stroke:0">Was-wäre-wenn-</div>
<div class="t" style="left:479.00px;top:74.30px;line-height:13px;font-size:8.6px;color:#5f5f5f;font-weight:400;-webkit-text-stroke:0.15px;transform:scaleX(0.7822);transform-origin:0 0;-webkit-text-stroke:0">Analyse ▾</div>
<svg style="left:538px;top:45px;" width="18" height="16" viewBox="0 0 18 16" fill="none" stroke="#9a9a9a" stroke-width="1"><rect x="0.5" y="0.5" width="17" height="14"/><path d="M0.5 4 H17.5 M0.5 7.5 H17.5 M0.5 11 H17.5 M6 0.5 V14.5 M11.5 0.5 V14.5" stroke="#7a7a7a"/><path d="M2 12 L6.5 8 L10 9.5 L16 3" stroke-width="1.1"/></svg>
<div class="t" style="left:524.00px;top:63.90px;line-height:13px;font-size:8.6px;color:#5f5f5f;font-weight:400;-webkit-text-stroke:0.15px;transform:scaleX(0.8787);transform-origin:0 0;-webkit-text-stroke:0">Prognoseblatt</div>
<div class="a" style="left:589px;top:43px;width:19px;height:18px;background:#2f2f2f;border:1px solid #5a5a5a"></div>
<svg style="left:593px;top:48px;" width="12" height="9" viewBox="0 0 12 9" fill="none" stroke="#cfcfcf" stroke-width="0.9"><rect x="0.5" y="3" width="4" height="3.5"/><rect x="6.5" y="0.5" width="4.5" height="8"/><path d="M6.5 4.5 H11"/></svg>
<div class="t" style="left:581.30px;top:63.00px;line-height:14px;font-size:9.0px;color:#e2e2e2;font-weight:400;transform:scaleX(0.8062);transform-origin:0 0;-webkit-text-stroke:0.2px">Gliederung</div>
<div class="a" style="left:596.5px;top:77.5px;width:0;height:0;border-left:2px solid transparent;border-right:2px solid transparent;border-top:2px solid #e2e2e2"></div>
<svg style="left:626px;top:93px;" width="8" height="5" viewBox="0 0 8 5" fill="none" stroke="#d0d0d0" stroke-width="1"><path d="M0.7 4 L4 0.8 L7.3 4"/></svg>
<div class="t" style="left:8.10px;top:107.90px;line-height:13px;font-size:8.4px;color:#e2e2e2;font-weight:400;transform:scaleX(1.0341);transform-origin:0 0;">A2</div>
<div class="a" style="left:57.5px;top:111.8px;width:0;height:0;border-left:2.5px solid transparent;border-right:2.5px solid transparent;border-top:2.5px solid #e0e0e0"></div>
<div class="a" style="left:75px;top:110px;width:1.2px;height:1.4px;background:#cfcfcf;"></div>
<div class="a" style="left:75px;top:113px;width:1.2px;height:1.4px;background:#cfcfcf;"></div>
<div class="a" style="left:75px;top:116px;width:1.2px;height:1.4px;background:#cfcfcf;"></div>
<svg style="left:92px;top:110px;" width="8" height="8" viewBox="0 0 8 8" fill="none" stroke="#6a6a6a" stroke-width="1"><path d="M0.5 0.5 L7.5 7.5 M7.5 0.5 L0.5 7.5"/></svg>
<svg style="left:114px;top:110px;" width="9" height="8" viewBox="0 0 9 8" fill="none" stroke="#6a6a6a" stroke-width="1"><path d="M0.5 4 L3.2 6.8 L8.5 0.8"/></svg>
<svg style="left:135px;top:109px;" width="10" height="10" viewBox="0 0 10 10" fill="none" stroke="#e6e6e6" stroke-width="1"><path d="M1 8 C2.5 8.3 3.3 7.5 3.8 5 L4.6 1.8 C5 0.6 6 0.4 7 0.9" stroke-width="1.2"/><path d="M2.8 3.6 H6" stroke-width="0.9"/><path d="M5.2 4.6 L8.2 7.8 M8.2 4.6 L5.2 7.8" stroke-width="1"/></svg>
<div class="t" style="left:160.70px;top:109.20px;line-height:12px;font-size:8.2px;color:#e2e2e2;font-weight:400;">Abbildung 1</div>
<svg style="left:626px;top:110px;" width="8" height="5" viewBox="0 0 8 5" fill="none" stroke="#9a9a9a" stroke-width="1"><path d="M0.7 4 L4 0.8 L7.3 4"/></svg>
<div class="a" style="left:1px;top:435px;width:637px;height:17px;background:#212121;"></div>
<div class="a" style="left:1px;top:452px;width:637px;height:13px;background:#2a2a2a;border-radius:0 0 4px 4px"></div>
<div class="a" style="left:18px;top:441.5px;width:0;height:0;border-top:2.5px solid transparent;border-bottom:2.5px solid transparent;border-right:3px solid #8a8a8a"></div>
<div class="a" style="left:35px;top:441.5px;width:0;height:0;border-top:2.5px solid transparent;border-bottom:2.5px solid transparent;border-left:3px solid #8a8a8a"></div>
<div class="a" style="left:62px;top:438px;width:1px;height:12px;background:#555;"></div>
<div class="t" style="left:70.00px;top:437.30px;line-height:13px;font-size:8.4px;color:#e0e0e0;font-weight:400;transform:scaleX(0.9614);transform-origin:0 0;-webkit-text-stroke:0.2px #dadada">Tabelle1</div>
<div class="a" style="left:108px;top:436px;width:46px;height:15px;background:#ffffff;"></div>
<div class="a" style="left:108px;top:450px;width:46px;height:1px;background:#1e7145;"></div>
<div class="t" style="left:116.00px;top:437.30px;line-height:13px;font-size:8.4px;color:#17653b;font-weight:700;-webkit-text-stroke:0.15px;transform:scaleX(0.9421);transform-origin:0 0;filter:none">Tabelle2</div>
<svg style="left:174px;top:439px;" width="10" height="10" viewBox="0 0 10 10" fill="none" stroke="#c8c8c8" stroke-width="1"><circle cx="5" cy="5" r="4.3"/><path d="M5 2.5 V7.5 M2.5 5 H7.5"/></svg>
<div class="a" style="left:383px;top:440px;width:1.2px;height:1.4px;background:#bbb;"></div>
<div class="a" style="left:383px;top:443px;width:1.2px;height:1.4px;background:#bbb;"></div>
<div class="a" style="left:383px;top:446px;width:1.2px;height:1.4px;background:#bbb;"></div>
<div class="a" style="left:394px;top:440px;width:10px;height:9px;background:#3a3a3a;border:1px solid #555"></div>
<div class="a" style="left:397px;top:442px;width:0;height:0;border-top:2.5px solid transparent;border-bottom:2.5px solid transparent;border-right:3px solid #ddd"></div>
<div class="a" style="left:404px;top:440px;width:193px;height:9px;background:#555555;"></div>
<div class="a" style="left:617px;top:440px;width:9px;height:9px;background:#3a3a3a;border:1px solid #555"></div>
<div class="a" style="left:620px;top:442px;width:0;height:0;border-top:2.5px solid transparent;border-bottom:2.5px solid transparent;border-left:3px solid #ddd"></div>
<div class="t" style="left:6.00px;top:452.90px;line-height:13px;font-size:8.8px;color:#dcdcdc;font-weight:400;transform:scaleX(0.7805);transform-origin:0 0;">Zeigen</div>
<svg style="left:47px;top:455px;" width="9" height="8" viewBox="0 0 9 8" fill="none" stroke="#bbb" stroke-width="1"><rect x="0.5" y="0.5" width="8" height="6.5"/><circle cx="6" cy="5.5" r="1.8" fill="#ccc"/></svg>
<svg style="left:66px;top:454px;" width="10" height="10" viewBox="0 0 10 10" fill="none" stroke="#cfcfcf" stroke-width="1"><circle cx="5" cy="2" r="1.3"/><path d="M1 4 H9 M5 4 V7 L2.5 9.5 M5 7 L7.5 9.5"/></svg>
<div class="t" style="left:77.50px;top:453.10px;line-height:13px;font-size:8.8px;color:#dcdcdc;font-weight:400;transform:scaleX(0.8002);transform-origin:0 0;">Barrierefreiheit: Untersuchen</div>
<svg style="left:360px;top:454px;" width="10" height="10" viewBox="0 0 10 10" fill="none" stroke="#cfcfcf" stroke-width="1"><rect x="0.5" y="0.5" width="9" height="6.5"/><circle cx="6.5" cy="7" r="2.2" fill="#2a2a2a"/></svg>
<div class="t" style="left:370.00px;top:453.30px;line-height:13px;font-size:8.8px;color:#dcdcdc;font-weight:400;transform:scaleX(0.8070);transform-origin:0 0;">Anzeigeeinstellungen</div>
<svg style="left:456px;top:454px;" width="11" height="10" viewBox="0 0 11 10" fill="none" stroke="#4e4e4e" stroke-width="1"><rect x="0.5" y="0.5" width="10" height="8.5"/><path d="M0.5 3.3 H10.5 M0.5 6.1 H10.5 M3.8 0.5 V9 M7.2 0.5 V9"/></svg>
<svg style="left:482px;top:454px;" width="10" height="10" viewBox="0 0 10 10" fill="none" stroke="#4e4e4e" stroke-width="1"><rect x="0.5" y="0.5" width="9" height="8.5"/><rect x="3" y="2.5" width="4" height="5"/></svg>
<svg style="left:506px;top:454px;" width="10" height="10" viewBox="0 0 10 10" fill="none" stroke="#4e4e4e" stroke-width="1"><rect x="0.5" y="0.5" width="9" height="8.5"/><path d="M0.5 5 H9.5 M5 0.5 V5"/></svg>
<div class="a" style="left:527px;top:459px;width:4px;height:1px;background:#555;"></div>
<div class="a" style="left:534px;top:459px;width:61px;height:1px;background:#cfcfcf;"></div>
<div class="a" style="left:564px;top:457px;width:2px;height:5px;background:#e0e0e0;"></div>
<div class="a" style="left:598px;top:459px;width:4px;height:1px;background:#555;"></div>
<div class="a" style="left:599.5px;top:457.5px;width:1px;height:4px;background:#555;"></div>
<div class="t" style="left:611.60px;top:453.50px;line-height:11px;font-size:7.4px;color:#5a5a5a;font-weight:400;-webkit-text-stroke:0.15px;transform:scaleX(0.7934);transform-origin:0 0;">100%</div>
<div class="a" style="left:104px;top:142px;width:368px;height:242px;border:1px solid #a6c2e3;border-radius:5px;background:#f0f0f0;box-shadow:0 1px 5px rgba(0,0,0,0.2)"></div>
<div class="a" style="left:105px;top:143px;width:366px;height:18px;background:#6399d6;border-radius:4px 4px 0 0"></div>
<div class="t" style="left:110.00px;top:146.60px;line-height:12px;font-size:8.2px;color:#14243a;font-weight:400;-webkit-text-stroke:0.15px;transform:scaleX(0.9027);transform-origin:0 0;-webkit-text-stroke:0.2px">Optionen</div>
<div class="t" style="left:426.94px;top:145.30px;line-height:13px;font-size:8.4px;color:#17283d;font-weight:700;-webkit-text-stroke:0.15px;">?</div>
<svg style="left:453.5px;top:148px;" width="8" height="8" viewBox="0 0 8 8" fill="none" stroke="#1d3f66" stroke-width="1"><path d="M0.5 0.5 L7 7 M7 0.5 L0.5 7"/></svg>
<div class="a" style="left:110px;top:179px;width:356px;height:180px;background:#f9f9f9;border:1px solid #ececec;border-bottom-color:#ffffff"></div>
<div class="a" style="left:110px;top:165px;width:88px;height:15px;background:#fbfbfb;border:1px solid #e4e4e4;border-bottom:none"></div>
<div class="t" style="left:114.90px;top:167.50px;line-height:11px;font-size:7.6px;color:#1e1e1e;font-weight:400;-webkit-text-stroke:0.15px;transform:scaleX(0.9165);transform-origin:0 0;">Benutzerdefinierte Listen</div>
<div class="t" style="left:114.90px;top:182.90px;line-height:11px;font-size:7.6px;color:#1e1e1e;font-weight:400;-webkit-text-stroke:0.15px;transform:scaleX(0.9173);transform-origin:0 0;">Benutzerdefinierte Listen:</div>
<div class="a" style="left:115px;top:191.6px;width:4.5px;height:0.8px;background:#555;"></div>
<div class="a" style="left:114px;top:194px;width:136px;height:96px;background:#ffffff;border:1px solid #a8a8a8"></div>
<div class="a" style="left:239px;top:195px;width:10px;height:94px;background:#f0f0f0;"></div>
<div class="a" style="left:241.5px;top:198.5px;width:0;height:0;border-left:2.5px solid transparent;border-right:2.5px solid transparent;border-bottom:3px solid #a8a8a8"></div>
<div class="a" style="left:241.5px;top:283px;width:0;height:0;border-left:2.5px solid transparent;border-right:2.5px solid transparent;border-top:3px solid #a8a8a8"></div>
<div class="a" style="left:115px;top:195px;width:123px;height:8px;background:#0a78d7;"></div>
<div class="a" style="left:115px;top:195px;width:123px;height:94px;overflow:hidden">
<div class="t" style="left:2.00px;top:-1.10px;line-height:11px;font-size:7.3px;color:#ffffff;font-weight:400;transform:scaleX(0.94);transform-origin:0 0">Neue Liste</div>
<div class="t" style="left:2.00px;top:6.75px;line-height:11px;font-size:7.3px;color:#1e1e1e;font-weight:400;-webkit-text-stroke:0.15px;transform:scaleX(0.94);transform-origin:0 0">Mon, Tue, Wed, Thu, Fri, Sat, Sun</div>
<div class="t" style="left:2.00px;top:14.60px;line-height:11px;font-size:7.3px;color:#1e1e1e;font-weight:400;-webkit-text-stroke:0.15px;transform:scaleX(0.94);transform-origin:0 0">Monday, Tuesday, Wednesday, Thursday, Friday</div>
<div class="t" style="left:2.00px;top:22.45px;line-height:11px;font-size:7.3px;color:#1e1e1e;font-weight:400;-webkit-text-stroke:0.15px;transform:scaleX(0.94);transform-origin:0 0">Jan, Feb, Mar, Apr, May, Jun, Jul, Aug, Sep</div>
<div class="t" style="left:2.00px;top:30.30px;line-height:11px;font-size:7.3px;color:#1e1e1e;font-weight:400;-webkit-text-stroke:0.15px;transform:scaleX(0.94);transform-origin:0 0">January, February, March, April, May, June</div>
<div class="t" style="left:2.00px;top:38.15px;line-height:11px;font-size:7.3px;color:#1e1e1e;font-weight:400;-webkit-text-stroke:0.15px;transform:scaleX(0.94);transform-origin:0 0">Mo, Di, Mi, Do, Fr, Sa, So</div>
<div class="t" style="left:2.00px;top:46.00px;line-height:11px;font-size:7.3px;color:#1e1e1e;font-weight:400;-webkit-text-stroke:0.15px;transform:scaleX(0.94);transform-origin:0 0">Montag, Dienstag, Mittwoch, Donnerstag</div>
<div class="t" style="left:2.00px;top:53.85px;line-height:11px;font-size:7.3px;color:#1e1e1e;font-weight:400;-webkit-text-stroke:0.15px;transform:scaleX(0.94);transform-origin:0 0">Jan, Feb, Mär, Apr, Mai, Jun, Jul, Aug, Sep</div>
<div class="t" style="left:2.00px;top:61.70px;line-height:11px;font-size:7.3px;color:#1e1e1e;font-weight:400;-webkit-text-stroke:0.15px;transform:scaleX(0.94);transform-origin:0 0">Januar, Februar, März, April, Mai, Juni, Juli</div>
</div>
<div class="t" style="left:255.80px;top:183.30px;line-height:11px;font-size:7.6px;color:#1e1e1e;font-weight:400;-webkit-text-stroke:0.15px;transform:scaleX(0.9232);transform-origin:0 0;">Listeneinträge:</div>
<div class="a" style="left:255px;top:194px;width:136px;height:97px;background:#ffffff;border:1px solid #a8a8a8"></div>
<div class="a" style="left:380px;top:195px;width:10px;height:95px;background:#f0f0f0;"></div>
<div class="a" style="left:382.5px;top:198.5px;width:0;height:0;border-left:2.5px solid transparent;border-right:2.5px solid transparent;border-bottom:3px solid #a8a8a8"></div>
<div class="a" style="left:382.5px;top:284px;width:0;height:0;border-left:2.5px solid transparent;border-right:2.5px solid transparent;border-top:3px solid #a8a8a8"></div>
<div class="a" style="left:397px;top:194px;width:64px;height:13px;background:#fdfdfd;border:1px solid #d2d2d2;border-radius:2px"></div>
<div class="t" style="left:410.30px;top:195.00px;line-height:11px;font-size:7.6px;color:#1e1e1e;font-weight:400;-webkit-text-stroke:0.15px;transform:scaleX(0.9526);transform-origin:0 0;">Hinzufügen</div>
<div class="a" style="left:410.5px;top:204px;width:4px;height:0.8px;background:#333;"></div>
<div class="a" style="left:397px;top:212px;width:64px;height:13px;background:#fbfbfb;border:1px solid #dcdcdc;border-radius:2px"></div>
<div class="t" style="left:416.50px;top:213.30px;line-height:11px;font-size:7.6px;color:#9a9a9a;font-weight:400;transform:scaleX(0.8357);transform-origin:0 0;">Löschen</div>
<div class="t" style="left:125.25px;top:295.90px;line-height:11px;font-size:7.6px;color:#1e1e1e;font-weight:400;-webkit-text-stroke:0.15px;transform:scaleX(0.9133);transform-origin:0 0;">Drücken Sie die Eingabetaste, um Listeneinträge zu trennen.</div>
<div class="t" style="left:125.25px;top:305.30px;line-height:11px;font-size:7.6px;color:#1e1e1e;font-weight:400;-webkit-text-stroke:0.15px;transform:scaleX(0.9016);transform-origin:0 0;">Liste aus Zellen importieren:</div>
<div class="a" style="left:255px;top:306px;width:136px;height:13px;background:#ffffff;border:1px solid #a8a8a8"></div>
<div class="a" style="left:378px;top:307px;width:13px;height:12px;background:#fdfdfd;border:1px solid #c8c8c8"></div>
<svg style="left:380px;top:309px;" width="8" height="8" viewBox="0 0 8 8" fill="none" stroke="#111" stroke-width="1"><path d="M4 6 V1.5 M1.8 3.6 L4 1.2 L6.2 3.6" stroke-width="1.3"/><path d="M1 7.2 H7"/></svg>
<div class="t" style="left:257.80px;top:308.00px;line-height:11px;font-size:7.6px;color:#1e1e1e;font-weight:400;-webkit-text-stroke:0.15px;transform:scaleX(0.8442);transform-origin:0 0;">$A$2:$A$33</div>
<div class="a" style="left:293.5px;top:308px;width:0.8px;height:10px;background:#000;"></div>
<div class="a" style="left:397px;top:306px;width:64px;height:13px;background:#fdfdfd;border:1px solid #d2d2d2;border-radius:2px"></div>
<div class="t" style="left:410.70px;top:307.50px;line-height:11px;font-size:7.6px;color:#1e1e1e;font-weight:400;-webkit-text-stroke:0.15px;transform:scaleX(0.9396);transform-origin:0 0;">Importieren</div>
<div class="a" style="left:413.5px;top:316.8px;width:4.5px;height:0.8px;background:#333;"></div>
<div class="a" style="left:370px;top:365px;width:46px;height:14px;background:#fdfdfd;border:1px solid #3b82cc;border-radius:2px"></div>
<div class="t" style="left:387.37px;top:366.50px;line-height:12px;font-size:7.8px;color:#1e1e1e;font-weight:400;-webkit-text-stroke:0.15px;">OK</div>
<div class="a" style="left:422px;top:365px;width:45px;height:14px;background:#fdfdfd;border:1px solid #d6d6d6;border-radius:2px"></div>
<div class="t" style="left:427.60px;top:367.00px;line-height:11px;font-size:7.6px;color:#1e1e1e;font-weight:400;-webkit-text-stroke:0.15px;transform:scaleX(0.9092);transform-origin:0 0;">Abbrechen</div>
</body></html>
